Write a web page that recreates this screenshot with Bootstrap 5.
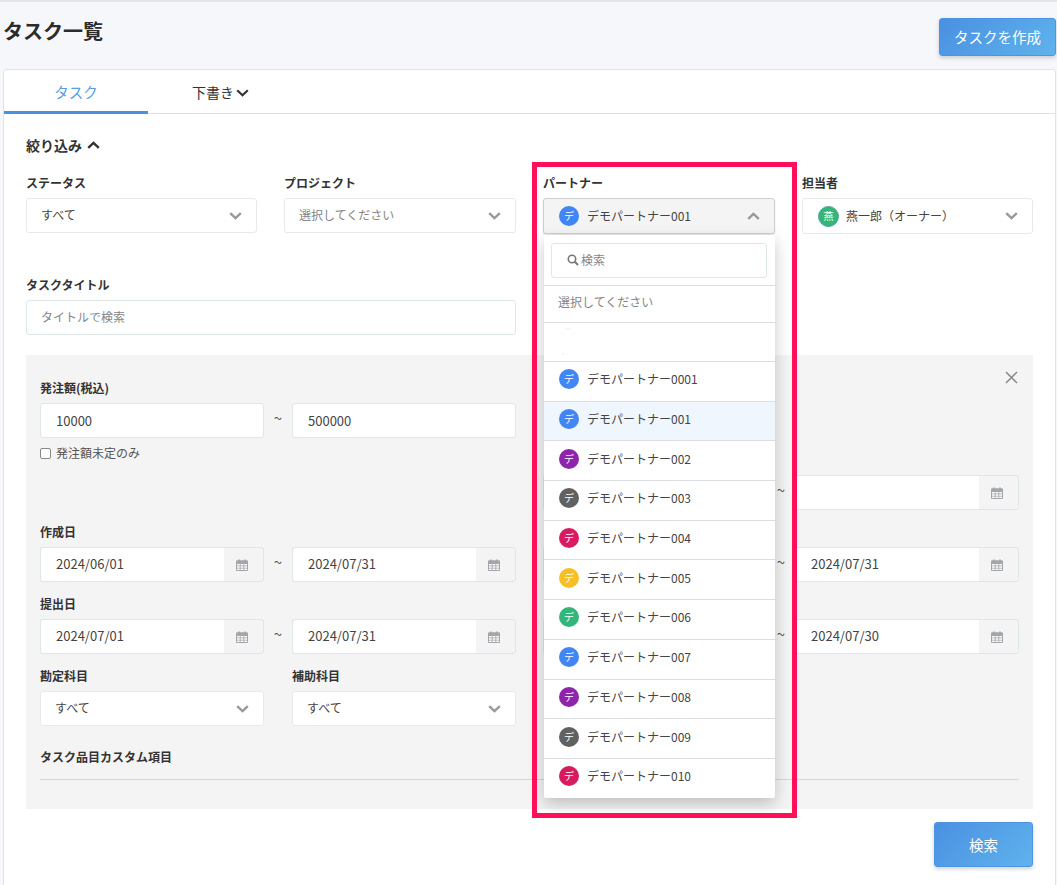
<!DOCTYPE html>
<html lang="ja">
<head>
<meta charset="utf-8">
<title>タスク一覧</title>
<link href="https://cdn.jsdelivr.net/npm/bootstrap@5.3.0/dist/css/bootstrap.min.css" rel="stylesheet">
<style>
html,body{height:885px;overflow:hidden}
body{background:#f5f7fb;border-top:2px solid #e4e6ea;font-family:"Noto Sans CJK JP","Noto Sans",sans-serif;font-size:12px;color:#333;position:relative}
.pg-head{padding:16px 1px 13px 3px}
.pg-title{font-size:20px;line-height:26px;font-weight:700;margin:0;color:#2b2b2b}
.grad-btn{background:linear-gradient(135deg,#4a90e2,#5fb3ec);border:1px solid #4d94e4;color:#fff;border-radius:3px;box-shadow:0 2px 4px rgba(0,0,0,.18);font-size:14.5px;padding:0}
.grad-btn:hover{color:#fff}
.create-btn{width:117px;height:38px}
.find-btn{width:99px;height:45px}
.task-card{height:830px;margin:0 1px 0 3px;border:1px solid #e1e3e6;border-radius:3px;background:#fff}
.tab-bar{height:44px;border-bottom:1px solid #dfe1e4}
.tab-item{display:flex;align-items:center;justify-content:center;height:44px;font-size:14.5px}
.tab-on{width:144px;color:#5a9be6;border-bottom:3px solid #4a90e2;padding-top:2px}
.tab-off{margin-left:44px;gap:2px;color:#333;font-size:14px;padding-top:1px}
.card-in{padding:24px 22px 0 22px}
.flt-toggle{line-height:14px;font-size:14px;font-weight:700;margin-bottom:24px;gap:5px;color:#333}
.fld-label{display:block;line-height:14px;font-weight:700;margin-bottom:8px;color:#333;white-space:nowrap}
.four-col{display:grid;grid-template-columns:231px 232px 232px 231px;gap:27px;align-items:start}
.sel-plain.form-select{height:35px;min-height:35px;border:1px solid #e9e9e9;border-radius:3px;font-size:12px;padding:0 30px 2px 14px;color:#444;background-size:13px 8px;background-position:right 14px center;box-shadow:none;background-image:url("data:image/svg+xml,%3Csvg xmlns='http://www.w3.org/2000/svg' viewBox='0 0 13 8'%3E%3Cpath d='M1.2 1.2 6.5 6.2 11.8 1.2' fill='none' stroke='%23999' stroke-width='2.4'/%3E%3C/svg%3E")}
.sel-ph.form-select{color:#858585}
.fake-sel{height:36px;border:1px solid #e9e9e9;border-radius:3px;background:#fff;padding:0 14px 0 15px;color:#444}
.fake-open{border-color:#cfcfcf;background:#f4f4f4;box-shadow:0 1px 2px rgba(0,0,0,.12);padding-left:15px}
.fake-sel svg{flex:none}
.dot-av{width:20px;height:20px;flex:none;border-radius:50%;display:flex;align-items:center;justify-content:center;color:#fff;font-size:10px;line-height:1;margin-right:8px}
.dot-blue{background:#4285f4}.dot-purple{background:#8e24aa}.dot-gray{background:#616161}.dot-pink{background:#d81b60}.dot-yellow{background:#f6bf26}.dot-green{background:#33b679}
.dot-big{width:21px;height:21px;margin-right:7px;border:1px solid #5c9ea0}
.title-row{margin-top:44px;width:490px}
.txt-in.form-control{height:35px;min-height:35px;border:1px solid #dfe8e8;border-radius:3px;font-size:12px;padding:0 14px 2px;color:#444;box-shadow:none}
.txt-in.form-control::placeholder{color:#858585}
.num-in.form-control{font-size:13px;padding:0 15px}
.gray-panel{position:relative;margin-top:20px;background:#f4f4f4;padding:26px 14px 29px}
.close-x{position:absolute;top:16px;right:15px;line-height:0}
.two-col{display:grid;grid-template-columns:1fr 1fr;column-gap:27px;row-gap:15px;align-items:start}
.span-two{grid-row:span 2}
.gap-cell{height:57px}
.range-row{display:grid;grid-template-columns:224px 28px 224px;align-items:center}
.til-mark{text-align:center;font-size:15px;color:#555;padding-bottom:6px;line-height:1}
.cal-grp{flex-wrap:nowrap}
.cal-grp .form-control{height:35px;border:1px solid #dfe8e8;border-right:0;border-radius:3px 0 0 3px;font-size:13px;padding:0 15px 2px;color:#444;box-shadow:none;min-width:0}
.cal-grp .input-group-text{width:41px;height:35px;justify-content:center;padding:0 2px 0 0;background:#f4f4f4;border:1px solid #dfe8e8;border-left:0;border-radius:0 3px 3px 0}
.chk-line{margin-top:8px;line-height:14px;color:#555;gap:5px}
.chk-line .form-check-input{width:11px;height:11px;margin:0;border:1px solid #888;border-radius:2px;flex:none}
.pair-sel{display:grid;grid-template-columns:224px 224px;justify-content:space-between}
.extra-block{margin-top:24px;padding-bottom:15px;line-height:14px;font-weight:700;border-bottom:1px solid #d6d6d6;color:#333}
.foot-row{margin-top:13px}
.sel-wrap{position:relative}
.drop-pane{position:absolute;top:59px;left:1px;width:231px;z-index:5;background:#fff;box-shadow:0 6px 16px rgba(0,0,0,.22);border-radius:0 0 2px 2px;margin:0;padding:0;list-style:none}
.drop-search{height:50px;padding:8px 8px 8px 7px}
.srch-box{height:35px;border:1px solid #dfe8e8;border-radius:3px;color:#858585;padding:0 0 2px 15px;gap:2px}
.drop-opt{height:39.7px;border-top:1px solid #dcdfe2;padding-left:15px;color:#444;padding-bottom:4px}
.opt-ph{height:37px;color:#858585;padding-left:14px}
.opt-blank{height:39px;padding-bottom:0}
.opt-on{background:#f0f6fd}
.red-frame{position:absolute;left:532px;top:160px;width:265px;height:656px;border:5px solid #ff1058;z-index:6;pointer-events:none}
</style>
</head>
<body>
<div class="pg-head d-flex justify-content-between align-items-start">
  <h1 class="pg-title">タスク一覧</h1>
  <button type="button" class="btn grad-btn create-btn">タスクを作成</button>
</div>
<div class="task-card">
  <div class="tab-bar d-flex">
    <div class="tab-item tab-on">タスク</div>
    <div class="tab-item tab-off">下書き<svg width="13" height="8" viewBox="0 0 13 8"><path d="M1.2 1.2 6.5 6.2 11.8 1.2" fill="none" stroke="#333" stroke-width="2.2"/></svg></div>
  </div>
  <div class="card-in">
    <div class="flt-toggle d-flex align-items-center">絞り込み<svg width="13" height="8" viewBox="0 0 13 8"><path d="M1.2 6.8 6.5 1.8 11.8 6.8" fill="none" stroke="#333" stroke-width="2.4"/></svg></div>
    <div class="four-col">
      <div><label class="fld-label">ステータス</label><select class="form-select sel-plain"><option>すべて</option></select></div>
      <div><label class="fld-label">プロジェクト</label><select class="form-select sel-plain sel-ph"><option>選択してください</option></select></div>
      <div class="sel-wrap">
        <label class="fld-label">パートナー</label>
        <div class="fake-sel fake-open d-flex align-items-center"><span class="dot-av dot-blue">デ</span><span class="flex-grow-1">デモパートナー001</span><svg width="13" height="8" viewBox="0 0 13 8"><path d="M1.2 6.8 6.5 1.8 11.8 6.8" fill="none" stroke="#999" stroke-width="2.4"/></svg></div>
        <ul class="drop-pane">
          <li class="drop-search"><div class="srch-box d-flex align-items-center"><svg width="12" height="12" viewBox="0 0 12 12"><circle cx="5" cy="5" r="3.7" fill="none" stroke="#777" stroke-width="1.6"/><path d="M7.8 7.8 11 11" stroke="#777" stroke-width="2"/></svg><span>検索</span></div></li>
          <li class="drop-opt opt-ph d-flex align-items-center">選択してください</li>
          <li class="drop-opt opt-blank d-flex align-items-center"><svg width="20" height="30" viewBox="0 0 20 30"><path d="M6 2h6M3 27h2" stroke="#ececec"/></svg></li>
          <li class="drop-opt d-flex align-items-center"><span class="dot-av dot-blue">デ</span>デモパートナー0001</li>
          <li class="drop-opt opt-on d-flex align-items-center"><span class="dot-av dot-blue">デ</span>デモパートナー001</li>
          <li class="drop-opt d-flex align-items-center"><span class="dot-av dot-purple">デ</span>デモパートナー002</li>
          <li class="drop-opt d-flex align-items-center"><span class="dot-av dot-gray">デ</span>デモパートナー003</li>
          <li class="drop-opt d-flex align-items-center"><span class="dot-av dot-pink">デ</span>デモパートナー004</li>
          <li class="drop-opt d-flex align-items-center"><span class="dot-av dot-yellow">デ</span>デモパートナー005</li>
          <li class="drop-opt d-flex align-items-center"><span class="dot-av dot-green">デ</span>デモパートナー006</li>
          <li class="drop-opt d-flex align-items-center"><span class="dot-av dot-blue">デ</span>デモパートナー007</li>
          <li class="drop-opt d-flex align-items-center"><span class="dot-av dot-purple">デ</span>デモパートナー008</li>
          <li class="drop-opt d-flex align-items-center"><span class="dot-av dot-gray">デ</span>デモパートナー009</li>
          <li class="drop-opt d-flex align-items-center"><span class="dot-av dot-pink">デ</span>デモパートナー010</li>
        </ul>
      </div>
      <div>
        <label class="fld-label">担当者</label>
        <div class="fake-sel d-flex align-items-center"><span class="dot-av dot-green dot-big">燕</span><span class="flex-grow-1">燕一郎（オーナー）</span><svg width="13" height="8" viewBox="0 0 13 8"><path d="M1.2 1.2 6.5 6.2 11.8 1.2" fill="none" stroke="#999" stroke-width="2.4"/></svg></div>
      </div>
    </div>
    <div class="title-row"><label class="fld-label">タスクタイトル</label><input class="form-control txt-in" placeholder="タイトルで検索"></div>
    <div class="gray-panel">
      <span class="close-x"><svg width="13" height="13" viewBox="0 0 13 13"><path d="M1 1 12 12M12 1 1 12" stroke="#888" stroke-width="1.5"/></svg></span>
      <div class="two-col">
        <div class="span-two">
          <label class="fld-label">発注額(税込)</label>
          <div class="range-row"><input class="form-control txt-in num-in" value="10000"><span class="til-mark">~</span><input class="form-control txt-in num-in" value="500000"></div>
          <div class="chk-line d-flex align-items-center"><input class="form-check-input" type="checkbox"><span>発注額未定のみ</span></div>
        </div>
        <div class="gap-cell"></div>
        <div>
          <label class="fld-label">&nbsp;</label>
          <div class="range-row">
            <div class="input-group cal-grp"><input class="form-control"><span class="input-group-text"><svg width="12" height="12" viewBox="0 0 12 12"><use href="#cal"/></svg></span></div>
            <span class="til-mark">~</span>
            <div class="input-group cal-grp"><input class="form-control"><span class="input-group-text"><svg width="12" height="12" viewBox="0 0 12 12"><use href="#cal"/></svg></span></div>
          </div>
        </div>
        <div>
          <label class="fld-label">作成日</label>
          <div class="range-row">
            <div class="input-group cal-grp"><input class="form-control" value="2024/06/01"><span class="input-group-text"><svg width="12" height="12" viewBox="0 0 12 12"><use href="#cal"/></svg></span></div>
            <span class="til-mark">~</span>
            <div class="input-group cal-grp"><input class="form-control" value="2024/07/31"><span class="input-group-text"><svg width="12" height="12" viewBox="0 0 12 12"><use href="#cal"/></svg></span></div>
          </div>
        </div>
        <div>
          <label class="fld-label">&nbsp;</label>
          <div class="range-row">
            <div class="input-group cal-grp"><input class="form-control"><span class="input-group-text"><svg width="12" height="12" viewBox="0 0 12 12"><use href="#cal"/></svg></span></div>
            <span class="til-mark">~</span>
            <div class="input-group cal-grp"><input class="form-control" value="2024/07/31"><span class="input-group-text"><svg width="12" height="12" viewBox="0 0 12 12"><use href="#cal"/></svg></span></div>
          </div>
        </div>
        <div>
          <label class="fld-label">提出日</label>
          <div class="range-row">
            <div class="input-group cal-grp"><input class="form-control" value="2024/07/01"><span class="input-group-text"><svg width="12" height="12" viewBox="0 0 12 12"><use href="#cal"/></svg></span></div>
            <span class="til-mark">~</span>
            <div class="input-group cal-grp"><input class="form-control" value="2024/07/31"><span class="input-group-text"><svg width="12" height="12" viewBox="0 0 12 12"><use href="#cal"/></svg></span></div>
          </div>
        </div>
        <div>
          <label class="fld-label">&nbsp;</label>
          <div class="range-row">
            <div class="input-group cal-grp"><input class="form-control"><span class="input-group-text"><svg width="12" height="12" viewBox="0 0 12 12"><use href="#cal"/></svg></span></div>
            <span class="til-mark">~</span>
            <div class="input-group cal-grp"><input class="form-control" value="2024/07/30"><span class="input-group-text"><svg width="12" height="12" viewBox="0 0 12 12"><use href="#cal"/></svg></span></div>
          </div>
        </div>
        <div class="pair-sel">
          <div><label class="fld-label">勘定科目</label><select class="form-select sel-plain"><option>すべて</option></select></div>
          <div><label class="fld-label">補助科目</label><select class="form-select sel-plain"><option>すべて</option></select></div>
        </div>
      </div>
      <div class="extra-block">タスク品目カスタム項目</div>
    </div>
    <div class="foot-row d-flex justify-content-end"><button type="button" class="btn grad-btn find-btn">検索</button></div>
  </div>
</div>
<div class="red-frame"></div>
<svg width="0" height="0" class="position-absolute"><defs><g id="cal"><path d="M.5 2h11v9.5H.5z" fill="#fff" stroke="#a3a6ab"/><path d="M.5 2h11v2.5H.5z" fill="#a3a6ab" stroke="#a3a6ab"/><path d="M3 .5v2M9 .5v2" stroke="#a3a6ab" stroke-width="1.6"/><path d="M4.2 4.5v7M7.8 4.5v7M.5 6.8h11M.5 9.2h11" stroke="#a3a6ab" stroke-width=".8"/></g></defs></svg>
</body>
</html>
